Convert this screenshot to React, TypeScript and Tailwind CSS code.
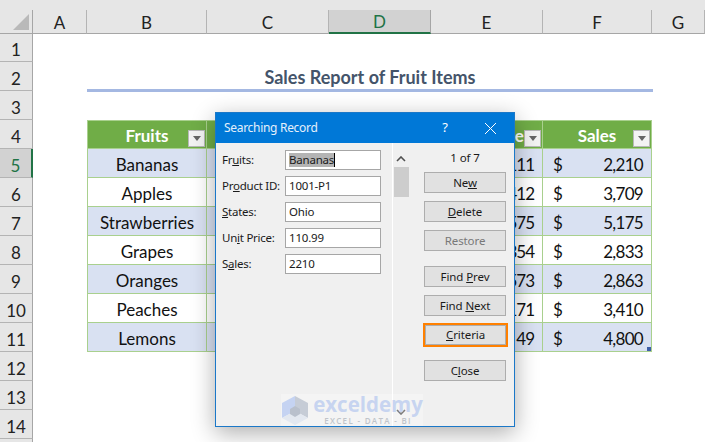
import React from 'react';

const columns = [
    { label: 'A', width: 'w-[54px]' },
    { label: 'B', width: 'w-[120px]' },
    { label: 'C', width: 'w-[122px]' },
    { label: 'D', width: 'w-[102px]' },
    { label: 'E', width: 'w-[112px]' },
    { label: 'F', width: 'w-[109px]' },
    { label: 'G', width: 'w-[53px]' },
];

const records = [
    ['Bananas', '1001-P1', 'Ohio', '111', '2,210'],
    ['Apples', '1002-P2', 'Texas', '412', '3,709'],
    ['Strawberries', '1003-P3', 'Utah', '575', '5,175'],
    ['Grapes', '1004-P4', 'Iowa', '354', '2,833'],
    ['Oranges', '1005-P5', 'Idaho', '573', '2,863'],
    ['Peaches', '1006-P6', 'Maine', '171', '3,410'],
    ['Lemons', '1007-P7', 'Ohio', '49', '4,800'],
];

function RowHeader({ n, active }: { n: number; active?: boolean }) {
    return (
        <div
            className={`flex w-[33px] shrink-0 items-center justify-center border-b border-b-[#b4b4b4] pt-[5px] text-[17px] ${
                active
                    ? 'border-r-[2px] border-r-[#217346] bg-[#d2d2d2] text-[#217346]'
                    : 'border-r border-r-[#a6a6a6] bg-[#e6e6e6] text-[#222]'
            }`}
        >
            {n}
        </div>
    );
}

function FilterButton() {
    return (
        <span className="absolute right-[1px] bottom-[1px] flex h-[17px] w-[17px] items-center justify-center border border-[#b8b8b8] bg-[#f3f3f3]">
            <span className="h-0 w-0 border-x-[4px] border-t-[5px] border-x-transparent border-t-[#666]" />
        </span>
    );
}

function HeaderCell({ width, children }: { width: string; children: React.ReactNode }) {
    return (
        <div className={`relative flex ${width} items-center justify-center border-y border-r border-[#a9d08e] bg-[#70ad47] pt-[2px] text-[17px] font-bold text-white`}>
            {children}
            <FilterButton />
        </div>
    );
}

function Field({ label, value, selected }: { label: React.ReactNode; value: string; selected?: boolean }) {
    return (
        <div className="flex h-[20px] items-center">
            <div className="w-[63px] text-[11.5px] tracking-[-0.25px] whitespace-nowrap text-[#1a1a1a]">{label}</div>
            <div className="flex h-[20px] w-[96px] items-center border border-[#a6a6a6] bg-white pl-[3px] text-[11.5px] tracking-[-0.2px] text-[#1a1a1a]">
                {selected ? (
                    <span className="border-r border-r-black bg-[#b4b4b4] leading-[14px]">{value}</span>
                ) : (
                    value
                )}
            </div>
        </div>
    );
}

function DialogButton({ children, className = '', disabled, size = 'h-[21px] w-[82px]' }: { children: React.ReactNode; className?: string; disabled?: boolean; size?: string }) {
    return (
        <div
            className={`flex ${size} shrink-0 items-center justify-center border border-[#adadad] bg-[#e1e1e1] text-[11.5px] tracking-[-0.1px] ${
                disabled ? 'text-[#787878]' : 'text-[#1a1a1a]'
            } ${className}`}
        >
            <span>{children}</span>
        </div>
    );
}

function Watermark() {
    return (
        <div className="absolute right-[91px] bottom-0 flex h-[32px] w-[142px] items-center bg-white/25">
            <svg width="28" height="31" viewBox="0 0 28 31" className="shrink-0">
                <path d="M14 1 L27 8 L27 23 L14 16 Z" fill="#c6ccd6" />
                <path d="M14 1 L1 8 L1 23 L14 16 Z" fill="#c5d3f2" />
                <path d="M1 23 L14 16 L27 23 L14 30 Z" fill="#e3e8f0" />
                <path d="M9 14 L14 11 L19 14 L19 19 L14 22 L9 19 Z" fill="#b9c0cc" />
            </svg>
            <div className="ml-[4px] flex w-[110px] flex-col items-center">
                <span className="text-[20.5px] leading-[19px] font-bold text-[#c7d4f0] [font-family:'Open_Sans',sans-serif]">exceldemy</span>
                <span className="mt-[2px] text-[8px] leading-[9px] font-semibold tracking-[1.3px] text-[#c0c4ca] [font-family:'Open_Sans',sans-serif]">EXCEL - DATA - BI</span>
            </div>
        </div>
    );
}

function SearchDialog() {
    return (
        <div className="absolute top-[112px] left-[215px] flex h-[315px] w-[300px] flex-col border border-[#1b78c8] bg-[#f0f0f0] shadow-[0_6px_22px_rgba(0,0,0,0.32)] [font-family:'Noto_Sans',sans-serif]">
            <div className="flex h-[30px] shrink-0 items-center bg-[#0078d7] pl-[8px] text-white">
                <span className="text-[12px] tracking-[-0.3px] text-[#e4f0fb]">Searching Record</span>
                <span className="ml-auto w-[16px] text-center text-[13px]">?</span>
                <svg width="13" height="13" viewBox="0 0 13 13" className="mr-[17px] ml-[31px]">
                    <path d="M1 1 L12 12 M12 1 L1 12" stroke="#fff" strokeWidth="1" fill="none" />
                </svg>
            </div>
            <div className="flex flex-1">
                <div className="flex w-[177px] flex-col gap-[6px] border-r border-r-white pt-[7px] pl-[6px]">
                    <Field label={<>Fr<u>u</u>its:</>} value="Bananas" selected />
                    <Field label={<>Pr<u>o</u>duct ID:</>} value="1001-P1" />
                    <Field label={<><u>S</u>tates:</>} value="Ohio" />
                    <Field label={<>Un<u>i</u>t Price:</>} value="110.99" />
                    <Field label={<>S<u>a</u>les:</>} value="2210" />
                </div>
                <div className="flex w-[16px] flex-col items-center pt-[13px] pb-[11px]">
                    <svg width="10" height="6" viewBox="0 0 10 6">
                        <path d="M1 5 L5 1 L9 5" stroke="#505050" strokeWidth="1.6" fill="none" />
                    </svg>
                    <div className="mt-[5px] h-[30px] w-[15px] bg-[#cdcdcd]" />
                    <svg width="10" height="6" viewBox="0 0 10 6" className="mt-auto">
                        <path d="M1 1 L5 5 L9 1" stroke="#505050" strokeWidth="1.6" fill="none" />
                    </svg>
                </div>
                <div className="flex flex-col pt-[7px] pl-[15px]">
                    <div className="flex h-[16px] w-[82px] items-center justify-center text-[11.5px] tracking-[-0.1px] text-[#1a1a1a]">1 of 7</div>
                    <DialogButton className="mt-[6px]">Ne<u>w</u></DialogButton>
                    <DialogButton className="mt-[8px]"><u>D</u>elete</DialogButton>
                    <DialogButton className="mt-[8px]" disabled>Restore</DialogButton>
                    <DialogButton className="mt-[15px]">Find <u>P</u>rev</DialogButton>
                    <DialogButton className="mt-[8px]">Find <u>N</u>ext</DialogButton>
                    <DialogButton size="h-[20px] w-[81px]" className="mt-[9px] ml-[1px] shadow-[0_0_0_2px_#ff8000]"><u>C</u>riteria</DialogButton>
                    <DialogButton className="mt-[15px]">C<u>l</u>ose</DialogButton>
                </div>
            </div>
            <Watermark />
        </div>
    );
}

export default function App() {
    return (
        <div className="relative h-[442px] w-[705px] overflow-hidden bg-white [font-family:Lato,sans-serif]">
            {/* Column letters */}
            <div className="flex h-[34px] bg-[#e6e6e6] pt-[10px]">
                <div className="flex w-[33px] shrink-0 items-end justify-end border-r border-b border-[#a6a6a6] pr-[3px] pb-[3px]">
                    <svg width="16" height="16" viewBox="0 0 16 16">
                        <path d="M16 0 L16 16 L0 16 Z" fill="#b9b9b9" />
                    </svg>
                </div>
                {columns.map((c) => (
                    <div
                        key={c.label}
                        className={`flex ${c.width} shrink-0 items-center justify-center border-r pt-[2px] text-[17px] ${
                            c.label === 'D'
                                ? 'border-r-[#a6a6a6] border-b-[2px] border-b-[#217346] bg-[#d2d2d2] text-[#217346]'
                                : 'border-r-[#b4b4b4] border-b border-b-[#a6a6a6] text-[#222]'
                        }`}
                    >
                        {c.label}
                    </div>
                ))}
            </div>

            <div className="flex h-[28px]"><RowHeader n={1} /></div>

            {/* Report title */}
            <div className="flex h-[29px]">
                <RowHeader n={2} />
                <div className="ml-[54px] flex h-[30px] w-[566px] items-center justify-center border-b-[3px] border-b-[#a4b8e2] pt-[3px] text-[18px] font-bold text-[#44546a]">
                    Sales Report of Fruit Items
                </div>
            </div>

            <div className="flex h-[29px]"><RowHeader n={3} /></div>

            <div className="flex h-[29px]">
                <RowHeader n={4} />
                <div className="ml-[54px] flex border-l border-[#a9d08e]">
                    <HeaderCell width="w-[119px]">Fruits</HeaderCell>
                    <HeaderCell width="w-[122px]">Product ID</HeaderCell>
                    <HeaderCell width="w-[102px]">States</HeaderCell>
                    <HeaderCell width="w-[112px]">Unit Price</HeaderCell>
                    <HeaderCell width="w-[109px]">Sales</HeaderCell>
                </div>
            </div>

            {records.map((r, i) => (
                <div key={r[0]} className="flex h-[29px]">
                    <RowHeader n={i + 5} active={i === 0} />
                    <div
                        className={`ml-[54px] flex border-b border-l border-[#a9d08e] text-[17px] text-[#111] ${
                            i % 2 === 0 ? 'bg-[#d9e1f2]' : 'bg-white'
                        }`}
                    >
                        <div className="flex w-[119px] items-center justify-center border-r border-[#a9d08e] pt-[3px]">{r[0]}</div>
                        <div className="flex w-[122px] items-center justify-center border-r border-[#a9d08e] pt-[3px]">{r[1]}</div>
                        <div className="flex w-[102px] items-center justify-center border-r border-[#a9d08e] pt-[3px]">{r[2]}</div>
                        <div className="flex w-[112px] items-center justify-end border-r border-[#a9d08e] pt-[3px] pr-[8px] tracking-[-1px]">{r[3]}</div>
                        <div className="relative flex w-[109px] items-center justify-between border-r border-[#a9d08e] pt-[3px] pr-[8px] pl-[10px]">
                            <span>$</span>
                            <span className="tracking-[-0.7px]">{r[4]}</span>
                            {i === 6 && <span className="absolute right-0 bottom-0 h-[4px] w-[4px] bg-[#3f5fa8]" />}
                        </div>
                    </div>
                </div>
            ))}

            <div className="flex h-[29px]"><RowHeader n={12} /></div>
            <div className="flex h-[29px]"><RowHeader n={13} /></div>
            <div className="flex h-[29px]"><RowHeader n={14} /></div>
            <div className="flex h-[29px]"><div className="w-[33px] border-r border-r-[#a6a6a6] bg-[#e6e6e6]" /></div>

            <SearchDialog />
        </div>
    );
}
